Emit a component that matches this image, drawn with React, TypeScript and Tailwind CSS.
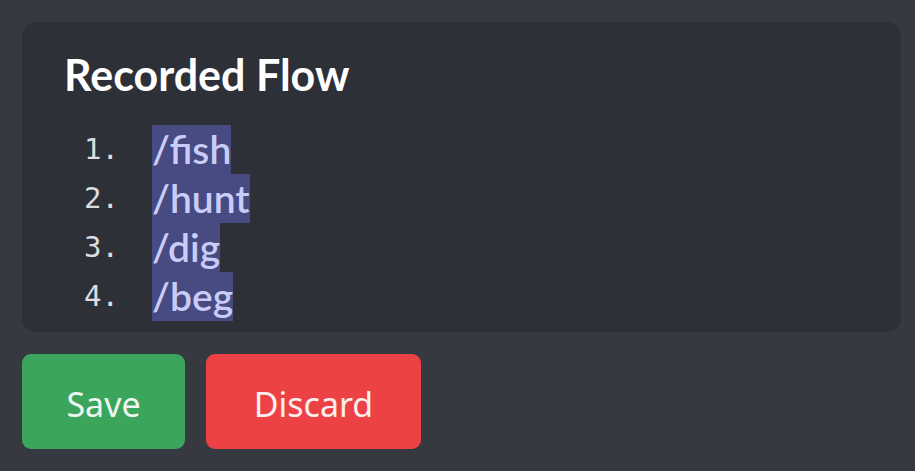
const steps = ["/fish", "/hunt", "/dig", "/beg"];

export default function App() {
  return (
    <div className="w-[915px] h-[471px] bg-[#373940] p-[22px] flex flex-col gap-[22px] overflow-hidden">
      {/* recorded flow card */}
      <div className="h-[311px] w-[879px] rounded-[14px] bg-[#2e3037] pl-[42px] pt-[31px] flex flex-col">
        <h1 className="text-white font-bold text-[43px] leading-[44px] font-['Lato','Noto_Sans',sans-serif]">
          Recorded Flow
        </h1>
        <ol className="mt-[28px] flex flex-col">
          {steps.map((s, i) => (
            <li key={s} className="flex items-center h-[49px]">
              <span className="w-[88px] pl-[20px] text-[#dcdde0] text-[29px] font-['DejaVu_Sans_Mono',monospace]">
                {i + 1}.
              </span>
              <span className="h-[49px] leading-[49px] bg-[#484a82] text-[#c9ccf8] text-[39px] font-semibold font-['Lato','Noto_Sans',sans-serif]">
                {s}
              </span>
            </li>
          ))}
        </ol>
      </div>

      {/* actions */}
      <div className="flex gap-[21px]">
        <button className="h-[95px] w-[163px] rounded-[9px] bg-[#3ba55c] pt-[5px] text-[#eef7ef] text-[34px] font-['Noto_Sans',sans-serif]">
          Save
        </button>
        <button className="h-[95px] w-[215px] rounded-[9px] bg-[#ed4245] pt-[5px] text-[#fbeeee] text-[34px] font-['Noto_Sans',sans-serif]">
          Discard
        </button>
      </div>
    </div>
  );
}
